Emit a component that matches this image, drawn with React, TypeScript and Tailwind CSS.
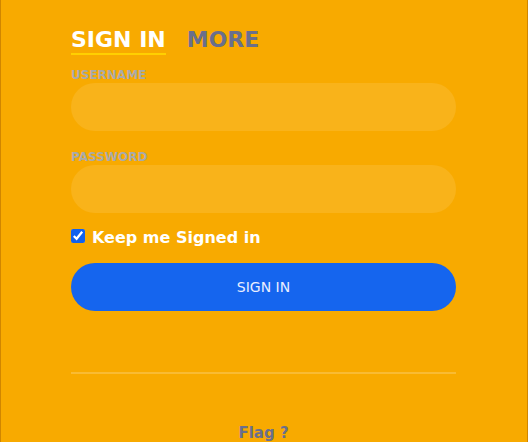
import React from "react";

export default function App() {
  return (
    <div
      className="w-[528px] h-[442px] overflow-hidden bg-[#f8aa00] border-x border-[#d08600]"
      style={{ fontFamily: '"DejaVu Sans", sans-serif' }}
    >
      <div className="ml-[70px] w-[385px] pt-[26px]">
        <div className="flex items-start">
          <div className="text-[22px] leading-[27px] font-bold text-white border-b-2 border-[#ffd000] mr-[21px]">
            SIGN IN
          </div>
          <div className="text-[22px] leading-[27px] font-bold text-[#6a6f8c]">MORE</div>
        </div>

        <div className="mt-[13px] text-[12px] leading-[14px] font-bold text-[#aaaaaa]">USERNAME</div>
        <div className="mt-[1px] h-[48px] rounded-full bg-white/10" />

        <div className="mt-[19px] text-[12px] leading-[14px] font-bold text-[#aaaaaa]">PASSWORD</div>
        <div className="mt-[1px] h-[48px] rounded-full bg-white/10" />

        <div className="mt-[16px] flex items-start h-[18px]">
          <input
            type="checkbox"
            checked
            readOnly
            className="m-0 w-[14px] h-[14px] accent-[#1161ee]"
          />
          <span className="ml-[7px] text-[16px] leading-[18px] font-bold text-white">Keep me Signed in</span>
        </div>

        <div className="mt-[16px] h-[48px] rounded-full bg-[#1565ee] flex items-center justify-center text-[14px] text-[#e8eeff]">
          SIGN IN
        </div>

        <div className="mt-[61px] h-[2px] bg-white/20" />

        <div className="mt-[50px] text-center text-[15px] leading-[18px] font-bold text-[#6a6f8c]">Flag ?</div>
      </div>
    </div>
  );
}
